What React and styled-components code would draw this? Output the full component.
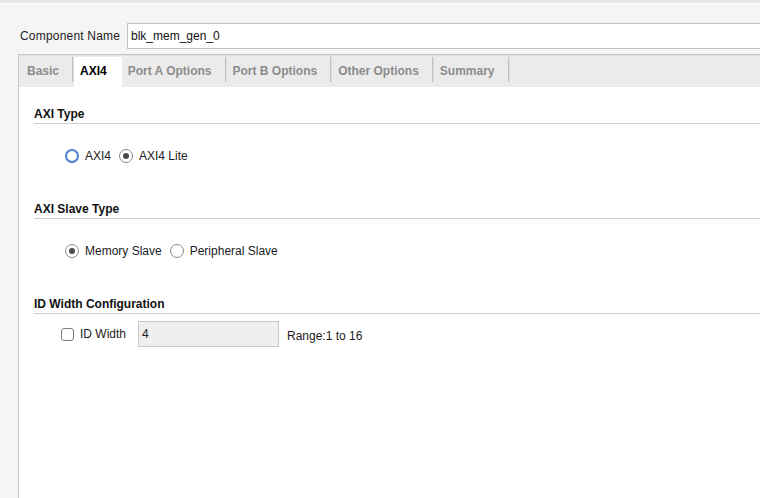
import React from 'react'
import styled, {createGlobalStyle} from 'styled-components'

const GlobalStyle = createGlobalStyle`
    html, body {
        margin: 0;
        padding: 0;
        background: #f5f5f5;
        overflow: hidden;
    }
    body {
        font-family: "Liberation Sans", Arial, sans-serif;
        font-size: 12px;
        color: #1c1c24;
    }
`

const Page = styled.div`
    height: 100vh;
    display: flex;
    flex-direction: column;
`

const TopStrip = styled.div`
    height: 3px;
    background: #e6e6e6;
    border-bottom: 1px solid #fcfcfc;
`

const NameRow = styled.div`
    display: flex;
    align-items: center;
    margin-top: 19px;
    padding-left: 20px;
`

const NameLabel = styled.label`
    width: 107px;
    letter-spacing: 0.2px;
`

const NameInput = styled.div`
    flex: 1;
    height: 24px;
    line-height: 25px;
    background: #fff;
    border: 1px solid #c2c2c2;
    border-right: none;
    padding-left: 3px;
    color: #111;
`

const Panel = styled.div`
    flex: 1;
    display: flex;
    flex-direction: column;
    margin-top: 5px;
    margin-left: 18px;
    border-top: 1px solid #c6c6c6;
    border-left: 1px solid #c8c8c8;
    box-shadow: inset 1px 0 0 #e4e4e4;
`

const TabStrip = styled.div`
    display: flex;
    height: 32px;
    padding: 2px 0 0 1px;
    box-sizing: border-box;
    background: #ebebeb;
    box-shadow: inset 0 1px 0 #e2e2e2;
`

const Tab = styled.div`
    height: 30px;
    line-height: 28px;
    padding: 0 15px 0 ${p => (p.$first ? 7 : 6)}px;
    font-weight: bold;
    color: ${p => (p.$active ? '#000' : '#8c8c8c')};
    background: ${p => (p.$active ? '#fff' : 'transparent')};
    background-image: ${p => (p.$active ? 'none' : 'linear-gradient(90deg, #c2c2c2 0 1px, #dedede 1px 2px)')};
    background-size: 2px 25px;
    background-position: right top;
    background-repeat: no-repeat;
    white-space: nowrap;
`

const Content = styled.div`
    flex: 1;
    background: #fff;
    padding: 18px 0 0 15px;
`

const SectionTitle = styled.div`
    font-weight: bold;
    line-height: 16px;
    padding: 1px 0 1px;
    border-bottom: 1px solid #d0d0d0;
    margin-top: ${p => p.$gap || 0}px;
    color: #111;
`

const OptionRow = styled.div`
    display: flex;
    align-items: center;
    height: 26px;
    margin-top: ${p => p.$gap}px;
    padding-left: ${p => p.$indent}px;
`

const RadioItem = styled.label`
    display: flex;
    align-items: center;
    margin-right: 8px;
`

const RadioCircle = styled.span`
    width: 14px;
    height: 14px;
    box-sizing: border-box;
    border-radius: 50%;
    background: #fff;
    border: ${p => (p.$focus ? '2px solid #4a7fd6' : '1px solid #8a8a8a')};
    display: flex;
    align-items: center;
    justify-content: center;
    margin-right: 6px;

    &::after {
        content: '';
        display: ${p => (p.$checked ? 'block' : 'none')};
        width: 6px;
        height: 6px;
        border-radius: 50%;
        background: #4a4a4a;
    }
`

const CheckBox = styled.span`
    width: 13px;
    height: 13px;
    box-sizing: border-box;
    border: 1px solid #7c7c7c;
    border-radius: 3px;
    background: #fff;
    margin-right: 6px;
`

const FieldLabel = styled.span`
    width: 58px;
`

const NumberInput = styled.div`
    width: 136px;
    height: 24px;
    line-height: 24px;
    padding-left: 3px;
    background: #efefef;
    border: 1px solid #c8c8c8;
    margin-right: 8px;
`

const Hint = styled.span`
    padding-top: 3px;
`

const tabs = ['Basic', 'AXI4', 'Port A Options', 'Port B Options', 'Other Options', 'Summary']

const Radio = ({label, checked, focus}) => (
    <RadioItem>
        <RadioCircle $checked={checked} $focus={focus}/>
        {label}
    </RadioItem>
)

const App = () => {
    return (
        <Page>
            <GlobalStyle/>
            <TopStrip/>
            <NameRow>
                <NameLabel>Component Name</NameLabel>
                <NameInput>blk_mem_gen_0</NameInput>
            </NameRow>
            <Panel>
                <TabStrip>
                    {tabs.map((t, i) => (
                        <Tab key={t} $first={i === 0} $active={t === 'AXI4'}>{t}</Tab>
                    ))}
                </TabStrip>
                <Content>
                    <SectionTitle>AXI Type</SectionTitle>
                    <OptionRow $gap={19} $indent={31}>
                        <Radio label="AXI4" focus/>
                        <Radio label="AXI4 Lite" checked/>
                    </OptionRow>

                    <SectionTitle $gap={31}>AXI Slave Type</SectionTitle>
                    <OptionRow $gap={19} $indent={31}>
                        <Radio label="Memory Slave" checked/>
                        <Radio label="Peripheral Slave"/>
                    </OptionRow>

                    <SectionTitle $gap={31}>ID Width Configuration</SectionTitle>
                    <OptionRow $gap={7} $indent={27}>
                        <CheckBox/>
                        <FieldLabel>ID Width</FieldLabel>
                        <NumberInput>4</NumberInput>
                        <Hint>Range:1 to 16</Hint>
                    </OptionRow>
                </Content>
            </Panel>
        </Page>
    );
}

export default App;
